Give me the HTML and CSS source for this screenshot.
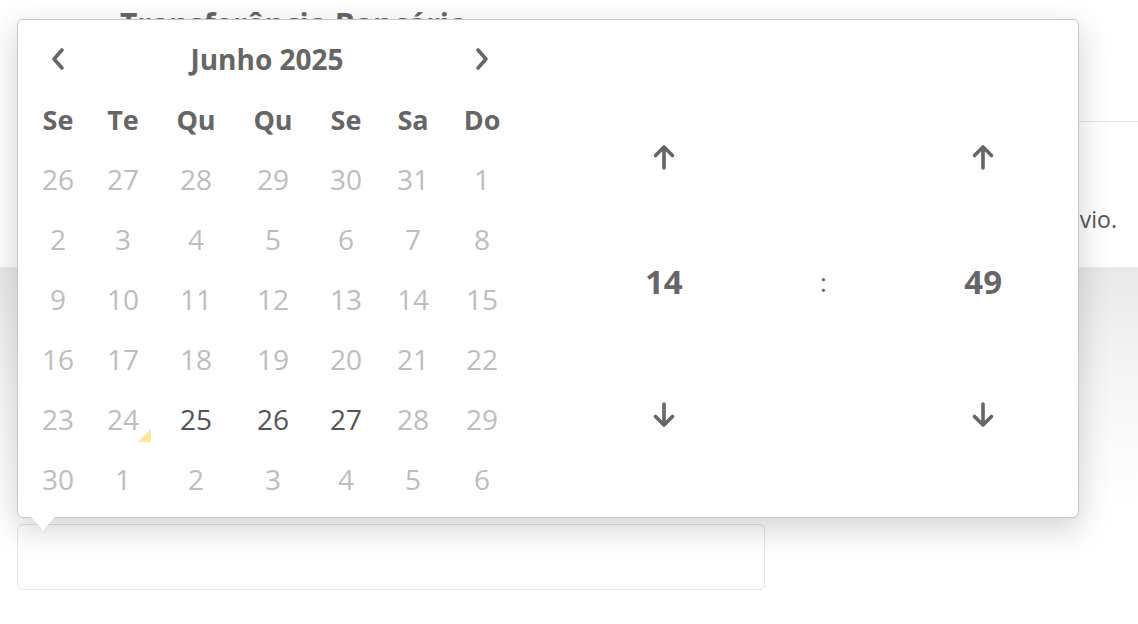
FILE: index.html
```html
<html>
<head>
  <meta charset="utf-8">
  <link rel="stylesheet" href="styles.css">
</head>
<body>
  <div class="page">
    <div class="page-header">
      <h2 class="page-title">Transferência Bancária</h2>
    </div>
    <div class="notice">
      <p>Os dados bancários para pagamento serão exibidos após o envio.</p>
    </div>
    <div class="summary"></div>

    <div class="field">
      <div class="field-input"></div>

      <!-- date picker popup -->
      <div class="picker">
        <div class="calendar">
          <div class="cal-header">
            <button class="nav prev">
              <svg width="18" height="26" viewBox="0 0 18 26"><path d="M13 4L5 13l8 9" fill="none" stroke="#666" stroke-width="3.6" stroke-linecap="round" stroke-linejoin="round"/></svg>
            </button>
            <div class="cal-title">Junho 2025</div>
            <button class="nav next">
              <svg width="18" height="26" viewBox="0 0 18 26"><path d="M5 4l8 9-8 9" fill="none" stroke="#666" stroke-width="3.6" stroke-linecap="round" stroke-linejoin="round"/></svg>
            </button>
          </div>
          <div class="days">
            <div class="wd">Se</div><div class="wd">Te</div><div class="wd">Qu</div><div class="wd">Qu</div><div class="wd">Se</div><div class="wd">Sa</div><div class="wd">Do</div>

            <div class="day">26</div><div class="day">27</div><div class="day">28</div><div class="day">29</div><div class="day">30</div><div class="day">31</div><div class="day">1</div>
            <div class="day">2</div><div class="day">3</div><div class="day">4</div><div class="day">5</div><div class="day">6</div><div class="day">7</div><div class="day">8</div>
            <div class="day">9</div><div class="day">10</div><div class="day">11</div><div class="day">12</div><div class="day">13</div><div class="day">14</div><div class="day">15</div>
            <div class="day">16</div><div class="day">17</div><div class="day">18</div><div class="day">19</div><div class="day">20</div><div class="day">21</div><div class="day">22</div>
            <div class="day">23</div><div class="day"><span class="today">24</span></div><div class="day on">25</div><div class="day on">26</div><div class="day on">27</div><div class="day">28</div><div class="day">29</div>
            <div class="day">30</div><div class="day">1</div><div class="day">2</div><div class="day">3</div><div class="day">4</div><div class="day">5</div><div class="day">6</div>
          </div>
        </div>

        <div class="time">
          <div class="time-col">
            <button class="step up">
              <svg width="26" height="28" viewBox="0 0 26 28"><path d="M13 25V4M4.5 12.5L13 4l8.5 8.5" fill="none" stroke="#666" stroke-width="3.6" stroke-linecap="round" stroke-linejoin="round"/></svg>
            </button>
            <div class="time-val">14</div>
            <button class="step down">
              <svg width="26" height="28" viewBox="0 0 26 28"><path d="M13 3v21M4.5 15.5L13 24l8.5-8.5" fill="none" stroke="#666" stroke-width="3.6" stroke-linecap="round" stroke-linejoin="round"/></svg>
            </button>
          </div>
          <div class="time-col">
            <div class="time-sep">:</div>
          </div>
          <div class="time-col">
            <button class="step up">
              <svg width="26" height="28" viewBox="0 0 26 28"><path d="M13 25V4M4.5 12.5L13 4l8.5 8.5" fill="none" stroke="#666" stroke-width="3.6" stroke-linecap="round" stroke-linejoin="round"/></svg>
            </button>
            <div class="time-val">49</div>
            <button class="step down">
              <svg width="26" height="28" viewBox="0 0 26 28"><path d="M13 3v21M4.5 15.5L13 24l8.5-8.5" fill="none" stroke="#666" stroke-width="3.6" stroke-linecap="round" stroke-linejoin="round"/></svg>
            </button>
          </div>
        </div>
      </div>
    </div>
  </div>
</body>
</html>
```

FILE: styles.css
```css
body {
  margin: 0;
  background: #fff;
  font-family: "Open Sans", "Noto Sans", sans-serif;
  color: #555;
}
.page {
  width: 1138px;
  height: 624px;
  overflow: hidden;
}
.page-header {
  height: 122px;
  border-bottom: 1px solid #e6e6e6;
  margin-left: 40px;
  padding-left: 80px;
  box-sizing: border-box;
}
.page-title {
  margin: 0;
  padding-top: 4px;
  font-size: 30px;
  line-height: 40px;
  font-weight: 700;
  color: #666;
}
.notice {
  height: 145px;
  padding-right: 21px;
  text-align: right;
}
.notice p {
  margin: 0;
  padding-top: 82px;
  font-size: 23px;
  line-height: 30px;
  color: #555;
}
.summary {
  height: 240px;
  background: linear-gradient(#e9e9e9, #f6f6f6 50%, #fff);
}
.field {
  position: relative;
  margin-top: 17px;
  margin-left: 17px;
  width: 748px;
}
.field-input {
  height: 66px;
  border: 1px solid #e4e4e4;
  border-radius: 6px;
  box-sizing: border-box;
  background: #fff;
}

/* popup */
.picker {
  position: absolute;
  left: 0;
  bottom: 72px;
  width: 1062px;
  height: 499px;
  box-sizing: border-box;
  border: 1px solid #c6c6c6;
  border-radius: 6px;
  background: #fff;
  box-shadow: 0 10px 30px 2px rgba(0, 0, 0, 0.17);
  display: flex;
}
.picker::after {
  content: "";
  position: absolute;
  left: 13px;
  bottom: -13px;
  border-left: 12px solid transparent;
  border-right: 12px solid transparent;
  border-top: 13px solid #fff;
}
.calendar {
  width: 502px;
  padding: 9px 0 0 8px;
  box-sizing: border-box;
}
.cal-header {
  display: flex;
  align-items: center;
  height: 60px;
  width: 494px;
}
.nav {
  border: 0;
  background: none;
  padding: 0;
  height: 60px;
  display: flex;
  align-items: center;
  justify-content: center;
}
.nav.prev { width: 64px; }
.nav.next { width: 76px; }
.cal-title {
  flex: 1;
  text-align: center;
  font-size: 28px;
  font-weight: 700;
  color: #666;
}
.days {
  display: grid;
  grid-template-columns: 64px 66px 80px 74px 72px 62px 76px;
  grid-auto-rows: 60px;
}
.wd, .day {
  display: flex;
  align-items: center;
  justify-content: center;
}
.wd {
  font-size: 27px;
  font-weight: 700;
  color: #666;
}
.day {
  font-size: 28px;
  color: #bdbdbd;
}
.day.on {
  color: #555;
}
.today {
  position: relative;
}
.today::after {
  content: "";
  position: absolute;
  right: -12px;
  bottom: -4px;
  border-left: 13px solid transparent;
  border-bottom: 13px solid #fde79a;
}

/* time */
.time {
  flex: 1;
  display: grid;
  grid-template-columns: 1fr 1fr 1fr;
  padding: 107px 15px 0 64px;
}
.time-col {
  display: flex;
  flex-direction: column;
  align-items: center;
}
.step {
  border: 0;
  background: none;
  padding: 0;
  width: 60px;
  height: 60px;
  display: flex;
  align-items: center;
  justify-content: center;
}
.step.down {
  margin-top: 72px;
}
.time-val, .time-sep {
  height: 60px;
  line-height: 60px;
  margin-top: 65px;
  font-size: 33px;
  font-weight: 700;
  color: #666;
}
.step.down {
  margin-top: 73px;
}
.time-sep {
  margin-top: 125px;
  font-size: 26px;
  font-weight: 400;
}
```
